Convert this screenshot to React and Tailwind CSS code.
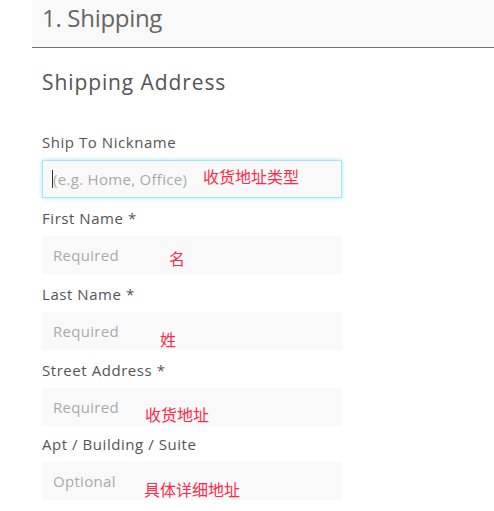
import React from "react";

const fields = [
  { label: "Ship To Nickname", ph: "(e.g. Home, Office)", note: "收货地址类型", nx: 161, ny: 8, focus: true, mt: "mt-[36px]", gap: "mt-[8px]" },
  { label: "First Name *", ph: "Required", note: "名", nx: 127, ny: 14, mt: "mt-[10px]", gap: "mt-[8px]" },
  { label: "Last Name *", ph: "Required", note: "姓", nx: 118, ny: 19, mt: "mt-[10px]", gap: "mt-[8px]" },
  { label: "Street Address *", ph: "Required", note: "收货地址", nx: 103, ny: 18, mt: "mt-[10px]", gap: "mt-[8px]" },
  { label: "Apt / Building / Suite", ph: "Optional", note: "具体详细地址", nx: 102, ny: 19, mt: "mt-[8px]", gap: "mt-[8px]" },
];

export default function App() {
  return (
    <div className="w-[494px] h-[511px] overflow-hidden bg-white font-['Open_Sans',sans-serif]">
      <div className="ml-[32px] h-[48px] bg-[#f9f9f9] border-b border-[#707070] pl-[10px] pt-[2px] text-[24px] leading-[32px] text-[#666] tracking-[-0.3px]">
        1. Shipping
      </div>
      <div className="pl-[42px]">
        <h2 className="mt-[20px] text-[21px] leading-[28px] text-[#555] tracking-[0.9px]">Shipping Address</h2>
        {fields.map((f) => (
          <div key={f.label} className={f.mt}>
            <div className="text-[15px] leading-[20px] text-[#555] tracking-[0.55px]">{f.label}</div>
            <div className={`relative ${f.gap} w-[300px] h-[38px]`}>
              <input
                readOnly
                placeholder={f.ph}
                className={
                  f.focus
                    ? "w-full h-full bg-[#f9f9f9] border border-[#a6e6f6] shadow-[0_0_4px_#9fe6f7] pl-[10px] text-[15px] outline-none placeholder:text-[#aaa] tracking-[0.3px]"
                    : "w-full h-full bg-[#f9f9f9] border border-[#f9f9f9] pl-[10px] text-[15px] outline-none placeholder:text-[#aaa] tracking-[0.3px]"
                }
              />
              {f.focus && (
                <span className="absolute left-[10px] top-[10px] w-px h-[18px] bg-[#333]" />
              )}
              <span
                className="absolute text-[16px] leading-[16px] text-[#ff2a4a] whitespace-nowrap font-['Noto_Sans_CJK_SC',sans-serif]"
                style={{ left: f.nx, top: f.ny }}
              >
                {f.note}
              </span>
            </div>
          </div>
        ))}
      </div>
    </div>
  );
}
